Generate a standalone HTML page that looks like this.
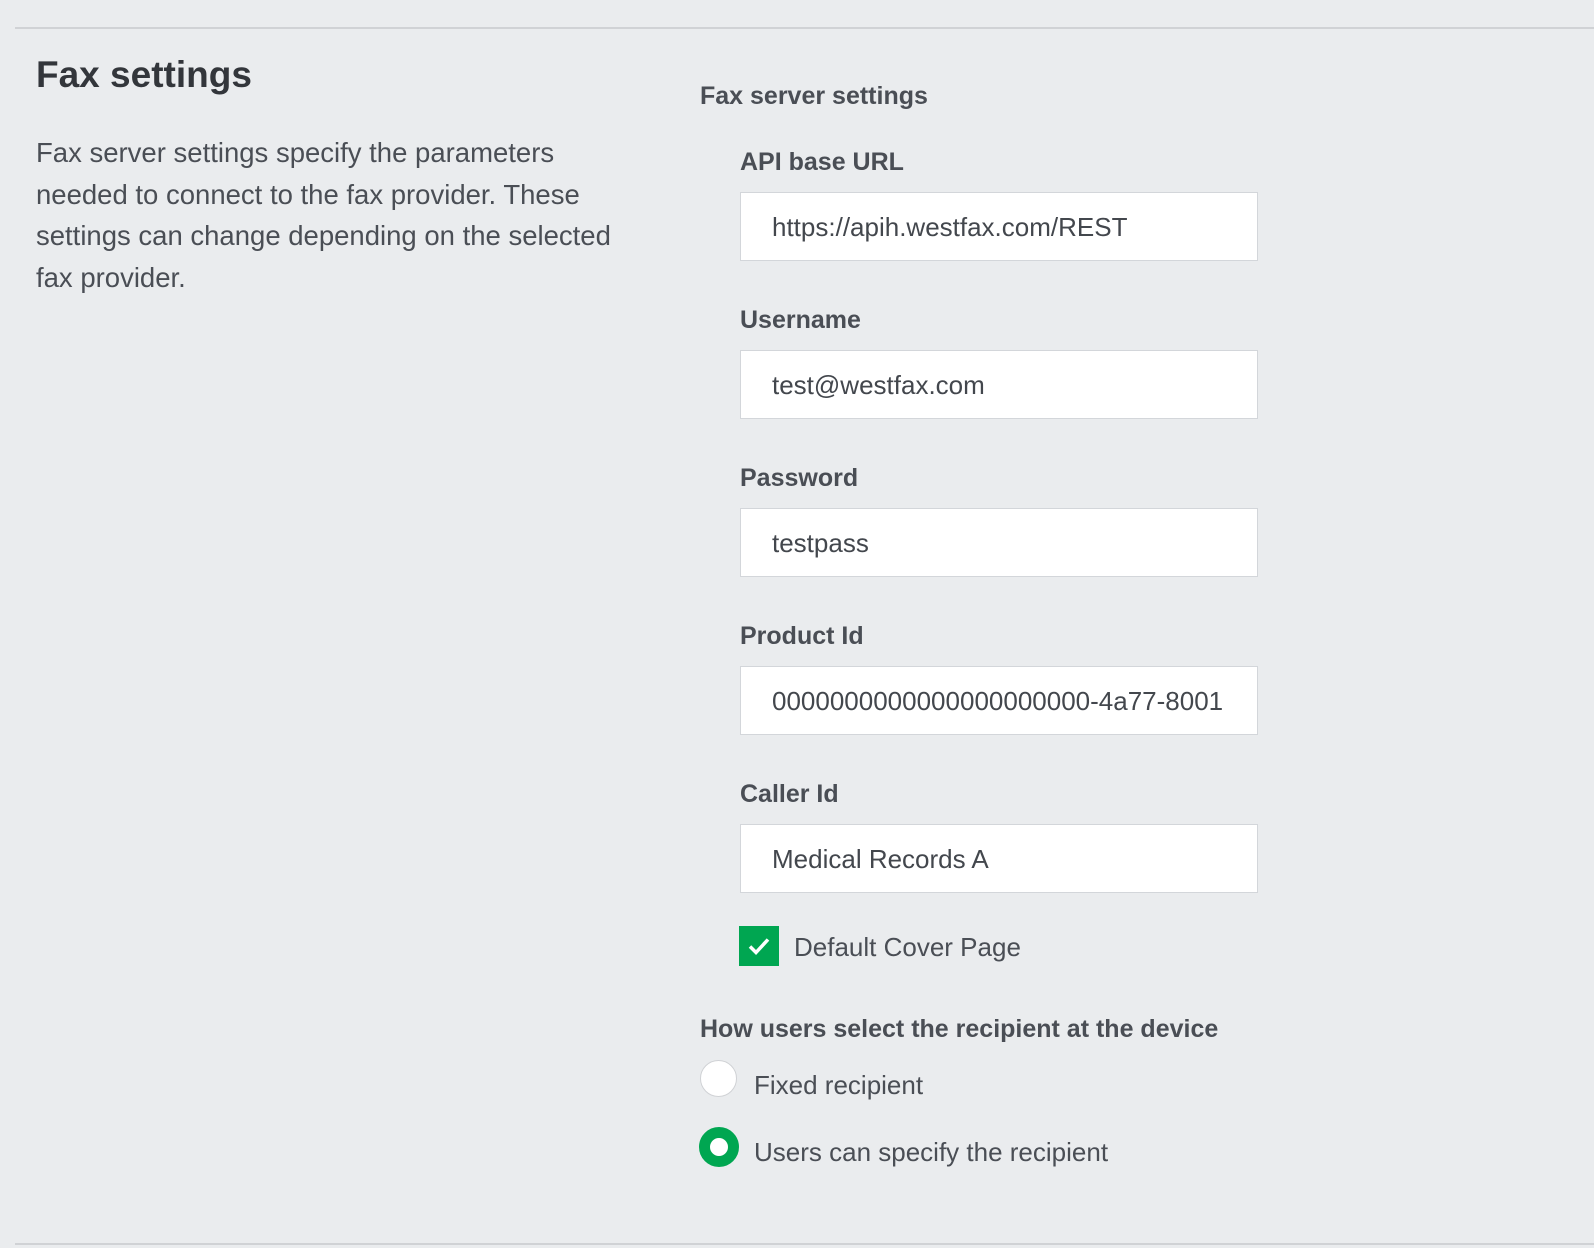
<!DOCTYPE html>
<html><head><meta charset="utf-8"><style>
html,body{margin:0;padding:0;}
body{width:1594px;height:1248px;background:#eaecee;position:relative;overflow:hidden;font-family:"Liberation Sans",sans-serif;color:#4a4e55;}
.a{position:absolute;white-space:nowrap;}
.line{position:absolute;left:15px;right:0;height:2px;background:#d0d2d5;}
.h1{font-size:37px;font-weight:bold;color:#33363b;left:36px;top:54px;}
.p{left:36px;top:132px;font-size:27.5px;line-height:41.7px;}
.h2{font-size:25px;font-weight:bold;left:700px;}
.lab{font-size:25px;font-weight:bold;left:740px;}
.inp{position:absolute;left:740px;background:#fff;border:1px solid #d3d6da;font-size:26px;line-height:69px;padding-left:31px;padding-right:30px;box-sizing:border-box;width:518px;height:69px;overflow:hidden;white-space:nowrap;color:#43474d;}
.inp span{display:block;overflow:hidden;}
.cb{position:absolute;left:739px;top:926px;width:40px;height:40px;background:#00a651;}
.r{position:absolute;width:37px;height:37px;border-radius:50%;box-sizing:border-box;}
.t{font-size:26px;}
</style></head><body>
<div class="line" style="top:27px"></div>
<div class="a h1">Fax settings</div>
<div class="a p">Fax server settings specify the parameters<br>needed to connect to the fax provider. These<br>settings can change depending on the selected<br>fax provider.</div>
<div class="a h2" style="top:82px">Fax server settings</div>

<div class="a lab" style="top:148px">API base URL</div>
<div class="inp" style="top:192px"><span>https://apih.westfax.com/REST</span></div>
<div class="a lab" style="top:306px">Username</div>
<div class="inp" style="top:350px"><span>test@westfax.com</span></div>
<div class="a lab" style="top:464px">Password</div>
<div class="inp" style="top:508px"><span>testpass</span></div>
<div class="a lab" style="top:622px">Product Id</div>
<div class="inp" style="top:666px"><span>0000000000000000000000-4a77-8001</span></div>
<div class="a lab" style="top:780px">Caller Id</div>
<div class="inp" style="top:824px"><span>Medical Records A</span></div>

<div class="cb"><svg width="40" height="40" viewBox="0 0 40 40"><path d="M11 20.5l6 6 12-13" stroke="#fff" stroke-width="3.5" fill="none"/></svg></div>
<div class="a t" style="left:794px;top:932px">Default Cover Page</div>

<div class="a h2" style="top:1015px">How users select the recipient at the device</div>
<div class="r" style="left:700px;top:1060px;background:#fff;border:1px solid #d0d2d5"></div>
<div class="a t" style="left:754px;top:1070px">Fixed recipient</div>
<div class="r" style="left:699px;top:1127px;border:11px solid #00a651;background:#fff;width:40px;height:40px"></div>
<div class="a t" style="left:754px;top:1137px">Users can specify the recipient</div>
<div class="line" style="top:1243px"></div>
</body></html>
